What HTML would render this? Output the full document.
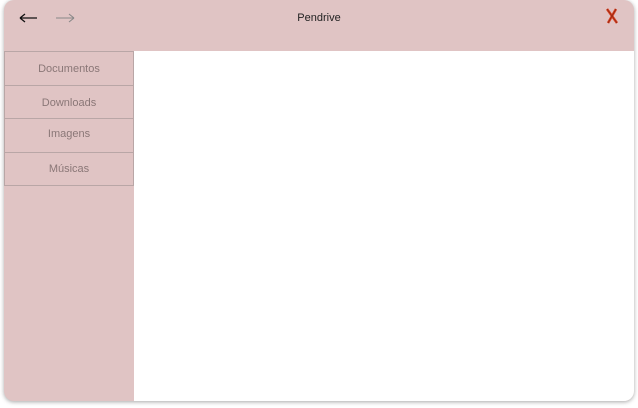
<!DOCTYPE html>
<html><head><style>
body{margin:0;width:638px;height:408px;background:#fff;overflow:hidden;font-family:"Liberation Sans",sans-serif}
.win{position:absolute;left:4px;top:0;width:630px;height:401px;background:#e0c4c4;border-radius:10px;box-shadow:0 1px 4px rgba(0,0,0,.35);overflow:hidden}
.content{position:absolute;left:130px;top:51px;width:500px;height:350px;background:#fff}
.item{position:absolute;left:0;width:130px;border:1px solid #b9a6a6;color:#8a7777;font-size:11px;text-align:center;box-sizing:border-box}
.title{position:absolute;left:0;width:630px;top:12px;text-align:center;font-size:11px;color:#222}
</style></head><body>
<div class="win">
<div class="title">Pendrive</div>
<svg style="position:absolute;left:14px;top:11px" width="66" height="14"><path d="M2 7H19M2 7L7 3M2 7L7 11" stroke="#111" stroke-width="1.3" fill="none"/><path d="M38 7H56M56 7L51 3M56 7L51 11" stroke="#888" stroke-width="1.1" fill="none"/></svg>
<svg style="position:absolute;left:601px;top:7px" width="14" height="18"><path d="M2 2L12 16M11 2L3 16" stroke="#d84020" stroke-width="2.5" fill="none"/><path d="M2 2L12 16M11 2L3 16" stroke="#7a2010" stroke-width="0.6" fill="none"/></svg>
<div class="content"></div>
<div class="item" style="top:51px;height:35px;line-height:34px">Documentos</div>
<div class="item" style="top:85px;height:34px;line-height:34px">Downloads</div>
<div class="item" style="top:118px;height:35px;line-height:30px">Imagens</div>
<div class="item" style="top:152px;height:34px;line-height:32px">Músicas</div>
</div>
</body></html>
